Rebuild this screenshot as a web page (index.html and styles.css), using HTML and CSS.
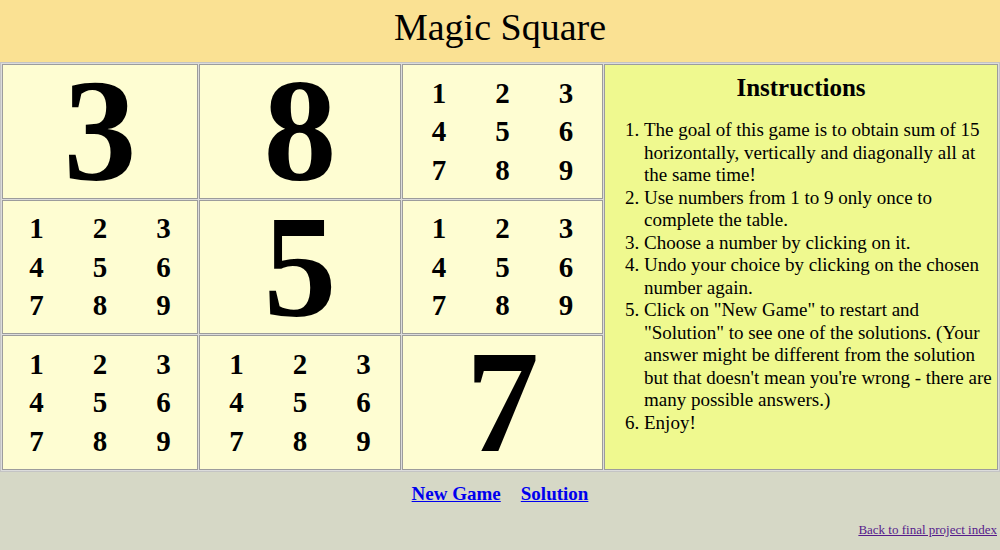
FILE: index.html
```html
<!DOCTYPE html>
<html>
<head>
<meta charset="utf-8">
<title>Magic Square</title>
<link rel="stylesheet" href="styles.css">
</head>
<body>
<header class="title-bar">Magic Square</header>
<main class="board">
  <div class="cell big">3</div>
  <div class="cell big">8</div>
  <div class="cell"><div class="picks"><span>1</span><span>2</span><span>3</span><span>4</span><span>5</span><span>6</span><span>7</span><span>8</span><span>9</span></div></div>
  <aside class="cell instructions">
    <h2>Instructions</h2>
    <ol>
      <li>The goal of this game is to obtain sum of 15 horizontally, vertically and diagonally all at the same time!</li>
      <li>Use numbers from 1 to 9 only once to complete the table.</li>
      <li>Choose a number by clicking on it.</li>
      <li>Undo your choice by clicking on the chosen number again.</li>
      <li>Click on "New Game" to restart and "Solution" to see one of the solutions. (Your answer might be different from the solution but that doesn't mean you're wrong - there are many possible answers.)</li>
      <li>Enjoy!</li>
    </ol>
  </aside>
  <div class="cell"><div class="picks"><span>1</span><span>2</span><span>3</span><span>4</span><span>5</span><span>6</span><span>7</span><span>8</span><span>9</span></div></div>
  <div class="cell big">5</div>
  <div class="cell"><div class="picks"><span>1</span><span>2</span><span>3</span><span>4</span><span>5</span><span>6</span><span>7</span><span>8</span><span>9</span></div></div>
  <div class="cell"><div class="picks"><span>1</span><span>2</span><span>3</span><span>4</span><span>5</span><span>6</span><span>7</span><span>8</span><span>9</span></div></div>
  <div class="cell"><div class="picks"><span>1</span><span>2</span><span>3</span><span>4</span><span>5</span><span>6</span><span>7</span><span>8</span><span>9</span></div></div>
  <div class="cell big">7</div>
</main>
<footer class="footer">
  <nav class="actions">
    <a href="#" class="action">New Game</a>
    <a href="#" class="action">Solution</a>
  </nav>
  <div class="back"><a href="#" class="back-link">Back to final project index</a></div>
</footer>
</body>
</html>
```
FILE: styles.css
```css
html, body {
  margin: 0;
  padding: 0;
}
body {
  font-family: "Liberation Serif", "Times New Roman", serif;
  background: #d6d8c6;
  color: #000;
}
.title-bar {
  height: 62px;
  background: #fae193;
  font-size: 38px;
  line-height: 54px;
  text-align: center;
}
.board {
  display: grid;
  grid-template-columns: 196px 202px 201px 1fr;
  grid-template-rows: 135px 134px 135px;
  gap: 1px;
  padding: 1px;
  border: 1px solid #c4c4c4;
  background: #dcdcdc;
}
.cell {
  box-sizing: border-box;
  border: 1px solid #9c9c9c;
  background: #fefdd2;
  display: flex;
  align-items: center;
  justify-content: center;
}
.big {
  font-size: 146px;
  font-weight: bold;
  line-height: 0.85;
}
.picks {
  display: grid;
  grid-template-columns: repeat(3, 63.5px);
  grid-auto-rows: 38.5px;
  align-items: center;
  justify-items: center;
  font-size: 29px;
  font-weight: bold;
  line-height: 1;
}
.instructions {
  grid-column: 4;
  grid-row: 1 / span 3;
  background: #eff98f;
  display: block;
  padding: 0;
}
.instructions h2 {
  margin: 9px 0 0;
  text-align: center;
  font-size: 25px;
  line-height: 28px;
}
.instructions ol {
  margin: 17px 0 0;
  padding-left: 39px;
  padding-right: 0;
  font-size: 19px;
  line-height: 22.5px;
}
.footer {
  padding-top: 11px;
  height: 68px;
}
.actions {
  display: flex;
  justify-content: center;
  gap: 20px;
  font-size: 19px;
  font-weight: bold;
  line-height: 22px;
}
.action {
  color: #0000ee;
}
.back {
  margin-top: 17px;
  text-align: right;
  padding-right: 3px;
  font-size: 13px;
  line-height: 15px;
}
.back-link {
  color: #551a8b;
}
```
